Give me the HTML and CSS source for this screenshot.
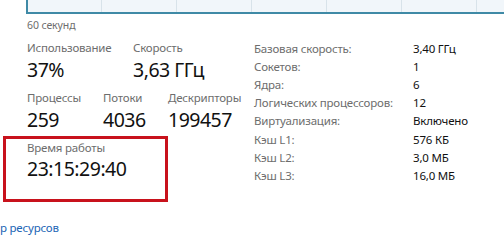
FILE: index.html
```html
<!DOCTYPE html>
<html lang="ru">
<head>
    <meta charset="UTF-8">
    <title>Производительность ЦП</title>
    <link rel="stylesheet" href="styles.css">
</head>
<body>
    <div class="chart"></div>
    <div class="axis">60 секунд</div>

    <div class="main">
        <div class="stats">
            <div class="stat-row">
                <div class="stat wide">
                    <div class="stat-label">Использование</div>
                    <div class="stat-value">37%</div>
                </div>
                <div class="stat">
                    <div class="stat-label">Скорость</div>
                    <div class="stat-value">3,63 ГГц</div>
                </div>
            </div>
            <div class="stat-row">
                <div class="stat narrow">
                    <div class="stat-label">Процессы</div>
                    <div class="stat-value">259</div>
                </div>
                <div class="stat mid">
                    <div class="stat-label">Потоки</div>
                    <div class="stat-value">4036</div>
                </div>
                <div class="stat">
                    <div class="stat-label">Дескрипторы</div>
                    <div class="stat-value">199457</div>
                </div>
            </div>
            <div class="uptime">
                <div class="stat-label">Время работы</div>
                <div class="stat-value">23:15:29:40</div>
            </div>
        </div>

        <div class="specs">
            <span class="spec-label">Базовая скорость:</span><span>3,40 ГГц</span>
            <span class="spec-label">Сокетов:</span><span>1</span>
            <span class="spec-label">Ядра:</span><span>6</span>
            <span class="spec-label">Логических процессоров:</span><span>12</span>
            <span class="spec-label">Виртуализация:</span><span>Включено</span>
            <span class="spec-label">Кэш L1:</span><span>576 КБ</span>
            <span class="spec-label">Кэш L2:</span><span>3,0 МБ</span>
            <span class="spec-label">Кэш L3:</span><span>16,0 МБ</span>
        </div>
    </div>

    <a href="#" class="monitor-link">р ресурсов</a>
</body>
</html>
```

FILE: styles.css
```css
body {
    margin: 0;
    padding: 0;
    font-family: "Noto Sans", "Open Sans", sans-serif;
    background-color: #fff;
    color: #1a1a1a;
}

.chart {
    margin-left: 26px;
    height: 12px;
    border-left: 2px solid #3f8aa6;
    border-bottom: 2px solid #3f8aa6;
    background-color: #f1f6fa;
    background-image: repeating-linear-gradient(to right,
        transparent 0, transparent 73px,
        #d8e3ea 73px, #d8e3ea 74px,
        transparent 74px, transparent 75px);
}

.axis {
    margin: 5px 0 0 27px;
    font-size: 10.5px;
    line-height: 13px;
    letter-spacing: -0.1px;
    color: #6d6d6d;
}

.main {
    display: flex;
    align-items: flex-start;
    margin-top: 8px;
}

.stats {
    width: 254px;
    padding-left: 3px;
    box-sizing: border-box;
}

.stat-row {
    display: flex;
    padding-left: 24px;
    margin-bottom: 7px;
}

.stat-row + .stat-row {
    margin-bottom: 3px;
}

.stat.wide {
    width: 106px;
}

.stat.narrow {
    width: 76px;
}

.stat.mid {
    width: 65px;
}

.stat-label {
    font-size: 11.5px;
    line-height: 16px;
    letter-spacing: -0.2px;
    color: #6d6d6d;
}

.stat-value {
    font-size: 19.5px;
    line-height: 27px;
    letter-spacing: -0.5px;
    color: #111;
}

.uptime {
    width: 165px;
    height: 66px;
    box-sizing: border-box;
    border: 3px solid #c8121c;
    padding: 1px 0 0 21px;
}

.uptime .stat-value {
    margin-top: -1px;
}

.specs {
    display: grid;
    grid-template-columns: 159px auto;
    grid-auto-rows: 18.1px;
    align-content: start;
    align-items: center;
    font-size: 11.5px;
    line-height: 16px;
    letter-spacing: -0.2px;
    color: #111;
    white-space: nowrap;
}

.spec-label {
    color: #6d6d6d;
}

.monitor-link {
    display: block;
    margin-top: 18px;
    font-size: 11.5px;
    line-height: 16px;
    letter-spacing: -0.2px;
    color: #1b65b5;
    text-decoration: none;
}
```
